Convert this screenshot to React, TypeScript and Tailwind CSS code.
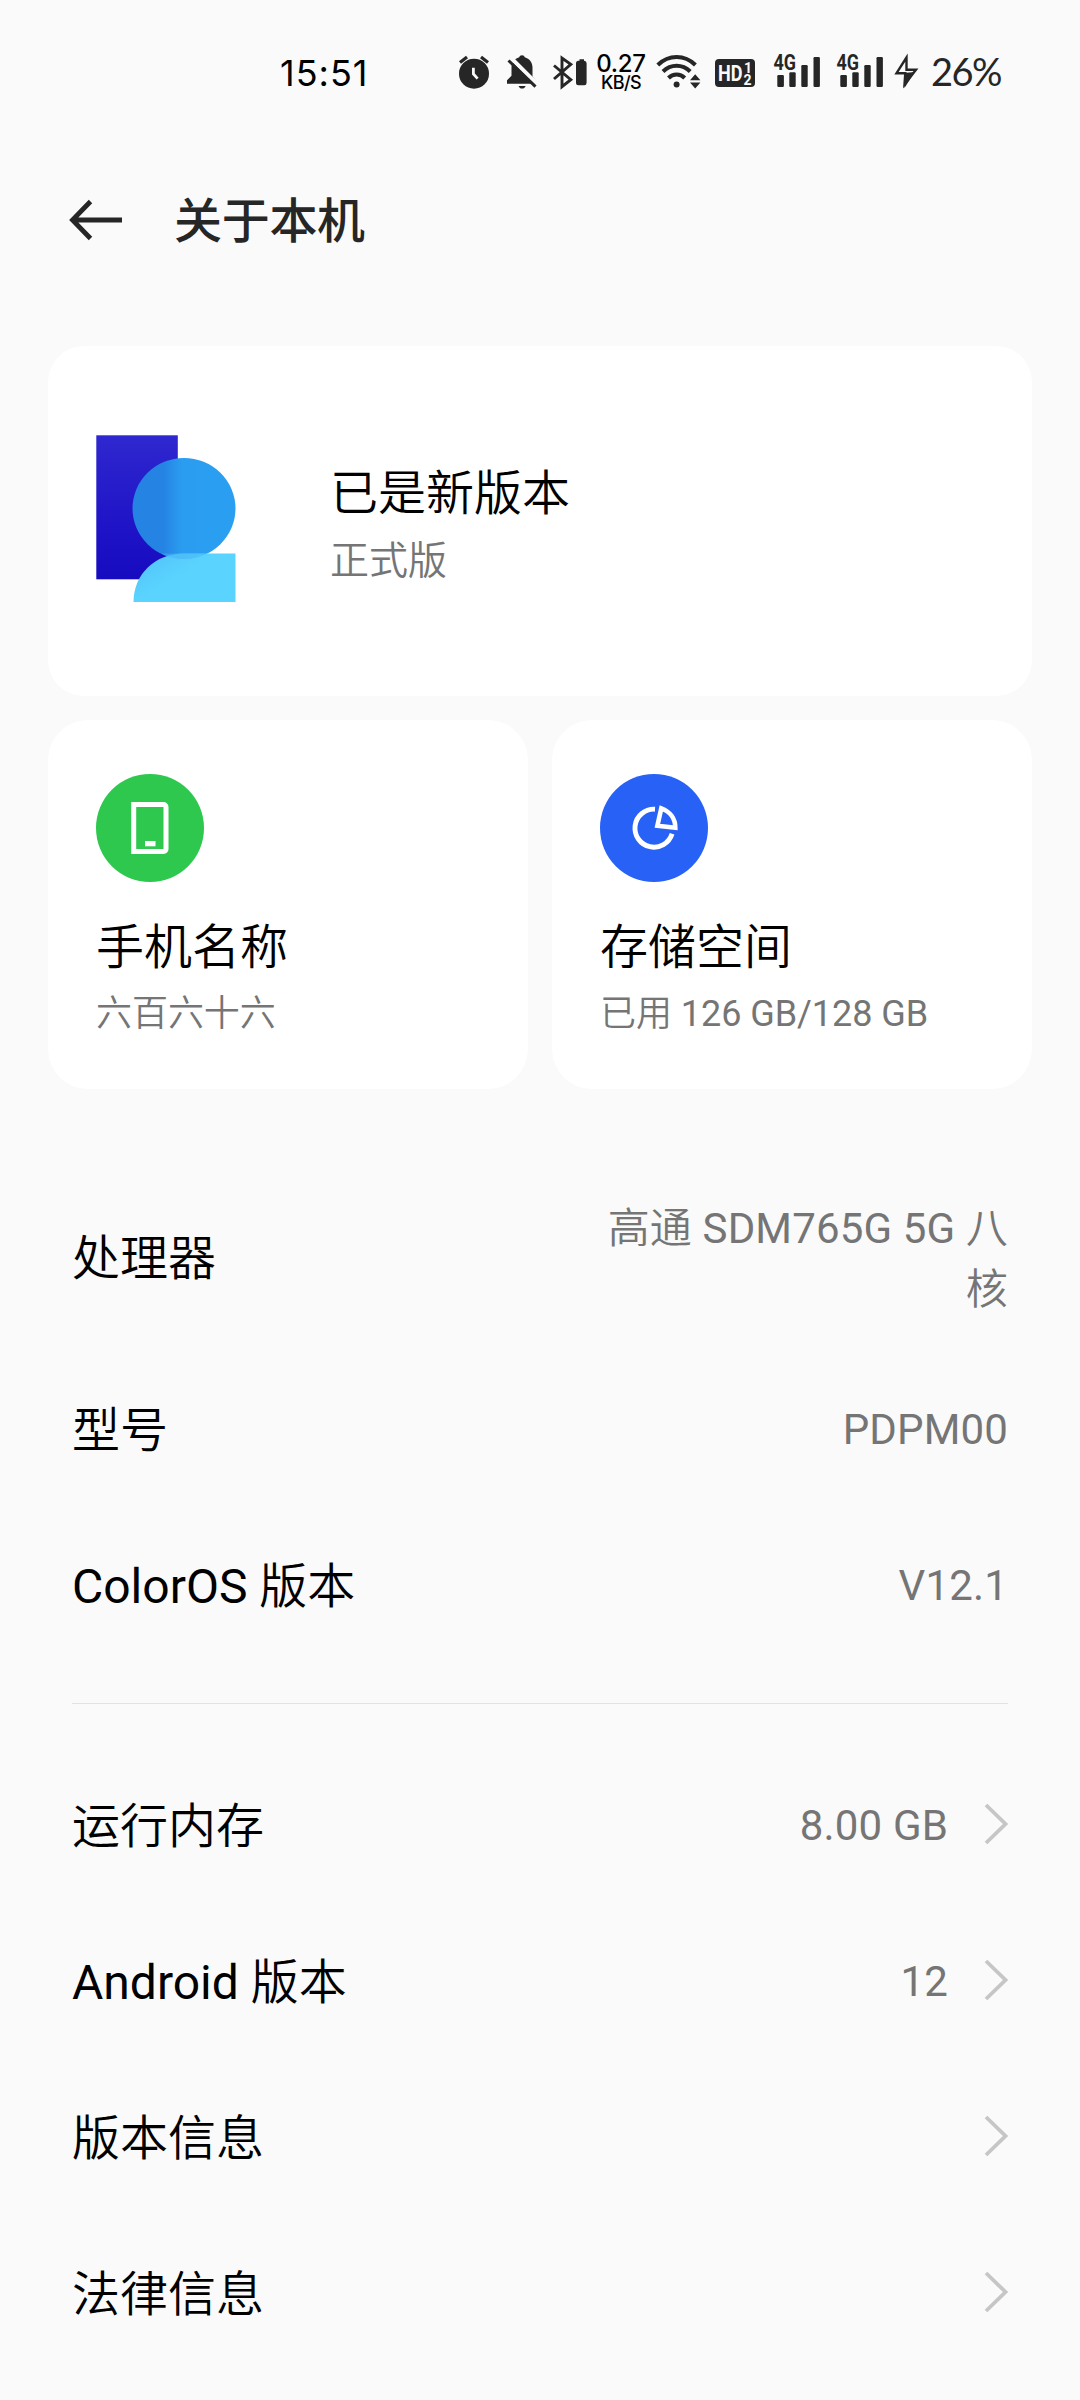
import type { ReactNode } from "react";

const INK = "#262626";

function Cell({ x, w, children }: { x: number; w: number; children: ReactNode }) {
  return (
    <svg width={w} height={56} viewBox={`${x} 44 ${w} 56`} fill={INK} className="shrink-0">
      {children}
    </svg>
  );
}

function Signal({ x }: { x: number }) {
  return (
    <Cell x={x} w={63}>
      <text x={x + 9.5} y={70.4} fontSize={21.5} fontWeight={700} fontFamily="Roboto" textLength={22.5} lengthAdjust="spacingAndGlyphs">
        4G
      </text>
      <rect x={x + 13.3} y={75} width={6.6} height={12} rx={1.2} />
      <rect x={x + 25.3} y={72.3} width={6.4} height={14.7} rx={1.2} />
      <rect x={x + 37.3} y={65} width={6.4} height={22} rx={1.2} />
      <rect x={x + 49.5} y={57} width={6.4} height={30} rx={1.2} />
    </Cell>
  );
}

function StatusBar() {
  return (
    <div className="flex h-36 items-center text-black">
      <div className="w-[175px] ml-[280px] mt-px font-['Inter',sans-serif] text-[36px] leading-none tracking-[1px]">15:51</div>
      <Cell x={455} w={44}>
        <circle cx={474} cy={73.7} r={15} />
        <path d="M460 62.5l7-5.6M488 62.5l-7-5.6" stroke={INK} strokeWidth={3.2} />
        <path d="M473.4 67.8v6.2l4.2 4.6" stroke="#fafafa" strokeWidth={2.8} fill="none" />
      </Cell>
      <Cell x={499} w={48}>
        <path d="M522 55.3c1.500 0 2.400.8 2.800 2 4.700 1.400 7.700 5.200 7.700 10.200v9l4.500 5.500v1.800H507v-3.500l4.500-4.500v-8.300c0-5 3-8.800 7.700-10.200.4-1.200 1.300-2 2.800-2z" />
        <path d="M518.500 86h7.200c-.7 1.700-2 2.600-3.600 2.600s-2.900-.9-3.600-2.600z" />
        <path d="M511.500 58.500l27 27" stroke="#fafafa" strokeWidth={4} />
        <path d="M508.500 60.500l27 26.200" stroke={INK} strokeWidth={3} />
      </Cell>
      <Cell x={547} w={45}>
        <path d="M554 65.500l16.800 14.200-8.800 7V58l8.800 6.300L554 79" fill="none" stroke={INK} strokeWidth={2.9} />
        <path d="M579.500 60.700v-1.500h4.500v1.500a2.500 2.500 0 0 1 2.600 2.500v19.600a2.500 2.500 0 0 1-2.600 2.500h-5.500a2.500 2.500 0 0 1-2.500-2.500V63.200a2.500 2.500 0 0 1 2.500-2.500z" />
      </Cell>
      <div className="flex w-[60px] flex-col items-center pr-0.5 pt-0.5 font-['Inter',sans-serif] font-medium">
        <div className="text-[24px] leading-[18px] tracking-[-0.3px]">0.27</div>
        <div className="text-[18px] leading-[19px] tracking-[-0.6px]">KB/S</div>
      </div>
      <Cell x={652} w={54}>
        <g fill="none" stroke={INK} strokeWidth={4}>
          <path d="M657.800 65c10.800-10.700 26.800-10.700 37.600 0" />
          <path d="M663 71.500c7.800-7.600 19.400-7.600 27.200 0" />
          <path d="M668.500 78c4.500-4.600 11.700-4.600 16.200 0" />
        </g>
        <circle cx={676.600} cy={84.400} r={3} />
        <path d="M690 80.200l5.200-6 5.200 6zM690 82.500h10.400l-5.200 6z" />
      </Cell>
      <Cell x={706} w={58}>
        <rect x={715} y={59} width={40} height={28} rx={4} />
        <g fill="#fafafa" fontFamily="Roboto" fontWeight={700}>
          <text x={718} y={80.500} fontSize={21.500} textLength={24.500} lengthAdjust="spacingAndGlyphs">HD</text>
          <text x={744} y={72.500} fontSize={14}>1</text>
          <text x={743.500} y={84.500} fontSize={14}>2</text>
        </g>
      </Cell>
      <Signal x={764} />
      <Signal x={827} />
      <Cell x={890} w={41}>
        <path d="M906.500 57.500l-10 15.700h8.800l-.8 11.500L916 69.700h-9.500z" fill="none" stroke={INK} strokeWidth={2.400} />
        <path d="M904 73l10.500-1-10 16z" />
      </Cell>
      <div className="mb-0.5 font-['Lato',sans-serif] text-[38px] leading-none tracking-[-1.5px] text-[#262626]">26%</div>
    </div>
  );
}

function Header() {
  return (
    <div className="flex h-[152px] items-center pl-[68px]">
      <svg width={56} height={44} viewBox="0 0 56 44" fill="none" stroke={INK} strokeWidth={4.800}>
        <path d="M22.500 3.500L4.500 22l18 18.500M4.500 22H54" />
      </svg>
      <h1 className="ml-[50px] mt-[3px] text-[48px] leading-none font-medium tracking-[-0.3px] text-[#262626]">关于本机</h1>
    </div>
  );
}

function Logo() {
  return (
    <svg width={140} height={168} viewBox="0 0 140 168" className="mb-1.5">
      <defs>
        <linearGradient id="slab" x1="0" y1="0" x2="0" y2="1">
          <stop offset="0" stopColor="#2f27cf" />
          <stop offset="0.700" stopColor="#1d12c6" />
          <stop offset="1" stopColor="#170bc0" />
        </linearGradient>
        <linearGradient id="head" x1="0" y1="0" x2="1" y2="0">
          <stop offset="0" stopColor="#2583e4" />
          <stop offset="0.300" stopColor="#2583e4" />
          <stop offset="0.480" stopColor="#2a9df0" />
          <stop offset="1" stopColor="#2a9ff2" />
        </linearGradient>
        <linearGradient id="body" x1="0" y1="0" x2="0.500" y2="0.400">
          <stop offset="0" stopColor="#50bff6" />
          <stop offset="1" stopColor="#5ad4ff" />
        </linearGradient>
      </defs>
      <rect x={0.300} y={1.300} width={81.500} height={144} fill="url(#slab)" />
      <ellipse cx={88} cy={74.500} rx={51.500} ry={50.500} fill="url(#head)" />
      <path d="M37.500 168c0-28 22-48.500 50-48.500h52V168z" fill="url(#body)" />
      <path d="M65 119.600h46q-23 11-46 0z" fill="#46b0f3" fillOpacity={0.500} />
    </svg>
  );
}

/** Sets runs of Chinese characters in a slightly lighter weight than Latin runs. */
function Mixed({ children }: { children: string }) {
  return (
    <>
      {children.split(/([\u4e00-\u9fff]+)/).map((run, i) =>
        i % 2 === 1 ? (
          <span key={i} className="font-[350]">
            {run}
          </span>
        ) : (
          run
        ),
      )}
    </>
  );
}

function Tile({ icon, title, sub }: { icon: ReactNode; title: string; sub: string }) {
  return (
    <div className="flex h-[369px] flex-1 flex-col rounded-[40px] bg-white px-12 pt-[54px]">
      {icon}
      <div className="mt-[42px] text-[48px] leading-[48px] text-black">
        <Mixed>{title}</Mixed>
      </div>
      <div className="mt-[24px] text-[36px] leading-[36px] tracking-[-0.05px] text-[#757575]">
        <Mixed>{sub}</Mixed>
      </div>
    </div>
  );
}

function PhoneIcon() {
  return (
    <svg width={108} height={108} viewBox="0 0 108 108">
      <circle cx={54} cy={54} r={54} fill="#2dc84d" />
      <path d="M37.700 30.500h29.800a2.500 2.500 0 0 1 2.500 2.500v42a2.500 2.500 0 0 1-2.500 2.500H37.700z" fill="none" stroke="#fff" strokeWidth={5} />
      <rect x={49} y={67} width={10.500} height={5.300} fill="#fff" />
    </svg>
  );
}

function PieIcon() {
  return (
    <svg width={108} height={108} viewBox="0 0 108 108" fill="none" stroke="#fff" strokeWidth={4.900}>
      <circle cx={54} cy={54} r={54} fill="#2861f6" stroke="none" />
      <path d="M55 35.200A19 19 0 1 0 72.100 59.800" />
      <path d="M61.300 34.300L57.400 51.700 75.300 53.700C75.300 45 70.200 37.500 61.300 34.300z" strokeWidth={4.600} />
    </svg>
  );
}

function Row({ label, value = "", link, tall }: { label: string; value?: string; link?: boolean; tall?: boolean }) {
  return (
    <div className={`flex items-center justify-between ${tall ? "h-[188px]" : "h-[156px]"}`}>
      <div className="text-[48px] leading-[60px] text-black">
        <Mixed>{label}</Mixed>
      </div>
      <div className="flex items-center">
        <div className={`max-w-[420px] text-right text-[42px] leading-[61px] tracking-[0.15px] text-[#757575] ${tall ? "" : "pb-[3px]"}`}>
          <Mixed>{value}</Mixed>
        </div>
        {link && (
          <svg width={24} height={42} viewBox="0 0 24 42" className="ml-9 mb-1.5" fill="none" stroke="#c6c6c6" strokeWidth={3.800}>
            <path d="M2 2l19.500 19L2 40" />
          </svg>
        )}
      </div>
    </div>
  );
}

export default function App() {
  return (
    <div className="h-[2400px] w-[1080px] overflow-hidden bg-[#fafafa] font-['Roboto','Noto_Sans_CJK_SC',sans-serif]">
      <StatusBar />
      <Header />
      <div className="mt-[50px] flex flex-col gap-6 px-12">
        <div className="flex h-[350px] items-center rounded-[36px] bg-white pl-12">
          <Logo />
          <div className="ml-[94px] mt-[9px]">
            <div className="text-[48px] leading-[48px] text-black">
              <Mixed>已是新版本</Mixed>
            </div>
            <div className="mt-[24px] text-[39px] leading-[39px] text-[#757575]">
              <Mixed>正式版</Mixed>
            </div>
          </div>
        </div>
        <div className="flex gap-6">
          <Tile icon={<PhoneIcon />} title="手机名称" sub="六百六十六" />
          <Tile icon={<PieIcon />} title="存储空间" sub="已用 126 GB/128 GB" />
        </div>
      </div>
      <div className="mt-[76px] px-[72px]">
        <Row label="处理器" value="高通 SDM765G 5G 八核" tall />
        <Row label="型号" value="PDPM00" />
        <Row label="ColorOS 版本" value="V12.1" />
        <div className="mt-[38px] mb-[45px] h-px bg-[#e2e2e2]" />
        <Row label="运行内存" value="8.00 GB" link />
        <Row label="Android 版本" value="12" link />
        <Row label="版本信息" link />
        <Row label="法律信息" link />
      </div>
    </div>
  );
}
